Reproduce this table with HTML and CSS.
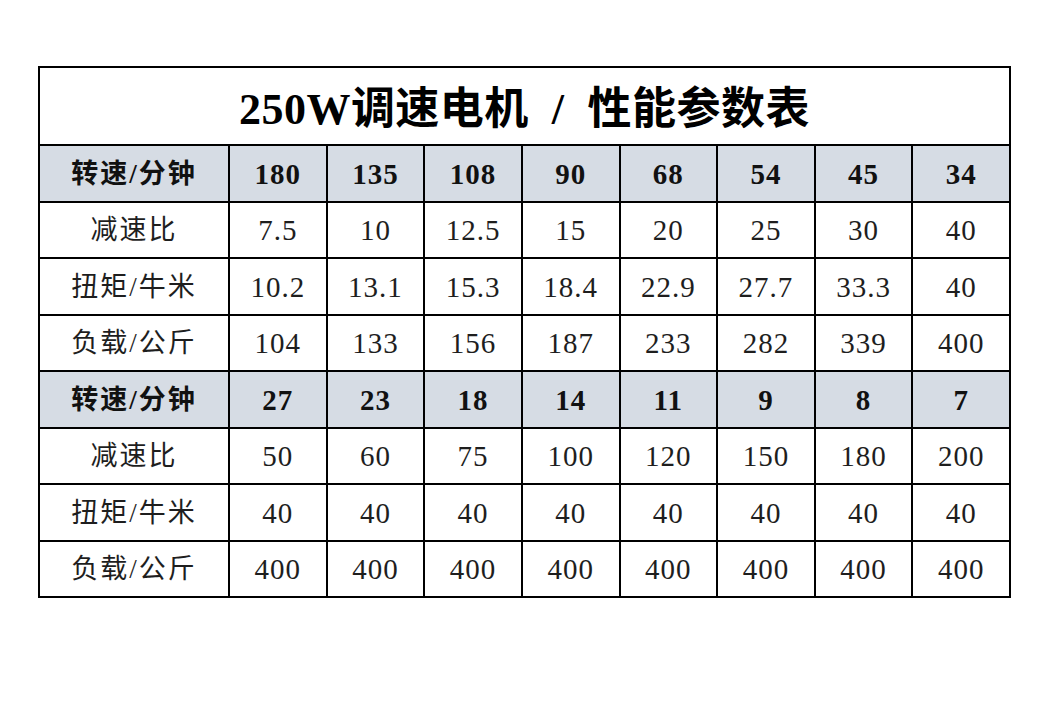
FILE: index.html
```html
<!DOCTYPE html>
<html lang="zh">
<head>
<meta charset="utf-8">
<title>250W调速电机 / 性能参数表</title>
<link rel="stylesheet" href="styles.css">
</head>
<body>
<div class="page">
<table class="spec">
<colgroup><col class="c-label"><col><col><col><col><col><col><col><col></colgroup>
<tr class="title-row"><th colspan="9">250W调速电机&nbsp; /&nbsp; 性能参数表</th></tr>
<tr class="head"><th>转速/分钟</th><td>180</td><td>135</td><td>108</td><td>90</td><td>68</td><td>54</td><td>45</td><td>34</td></tr>
<tr><th>减速比</th><td>7.5</td><td>10</td><td>12.5</td><td>15</td><td>20</td><td>25</td><td>30</td><td>40</td></tr>
<tr><th>扭矩/牛米</th><td>10.2</td><td>13.1</td><td>15.3</td><td>18.4</td><td>22.9</td><td>27.7</td><td>33.3</td><td>40</td></tr>
<tr><th>负载/公斤</th><td>104</td><td>133</td><td>156</td><td>187</td><td>233</td><td>282</td><td>339</td><td>400</td></tr>
<tr class="head"><th>转速/分钟</th><td>27</td><td>23</td><td>18</td><td>14</td><td>11</td><td>9</td><td>8</td><td>7</td></tr>
<tr><th>减速比</th><td>50</td><td>60</td><td>75</td><td>100</td><td>120</td><td>150</td><td>180</td><td>200</td></tr>
<tr><th>扭矩/牛米</th><td>40</td><td>40</td><td>40</td><td>40</td><td>40</td><td>40</td><td>40</td><td>40</td></tr>
<tr><th>负载/公斤</th><td>400</td><td>400</td><td>400</td><td>400</td><td>400</td><td>400</td><td>400</td><td>400</td></tr>
</table>
</div>
</body>
</html>
```
FILE: styles.css
```css
html, body {
  margin: 0;
  padding: 0;
  background: #fff;
}
.page {
  padding: 66px 0 0 38px;
}
.spec {
  width: 973px;
  border-collapse: collapse;
  table-layout: fixed;
  font-family: "Liberation Serif", "Noto Sans CJK SC", serif;
  color: #1e1e1e;
  border: 2px solid #000;
}
.c-label {
  width: 190px;
}
.spec th, .spec td {
  border: 2px solid #000;
  text-align: center;
  vertical-align: middle;
  padding: 2px 0 0;
  height: 52.5px;
  font-weight: normal;
  line-height: 1;
}
.spec td {
  font-size: 29px;
  letter-spacing: 1px;
}
.spec th {
  font-size: 27px;
  letter-spacing: 2px;
}
.title-row th {
  height: 69px;
  padding-top: 7px;
  font-size: 44px;
  font-weight: bold;
  color: #000;
  letter-spacing: 0.5px;
}
.head th, .head td {
  background: #d6dce4;
  font-weight: bold;
  color: #111;
}
```
